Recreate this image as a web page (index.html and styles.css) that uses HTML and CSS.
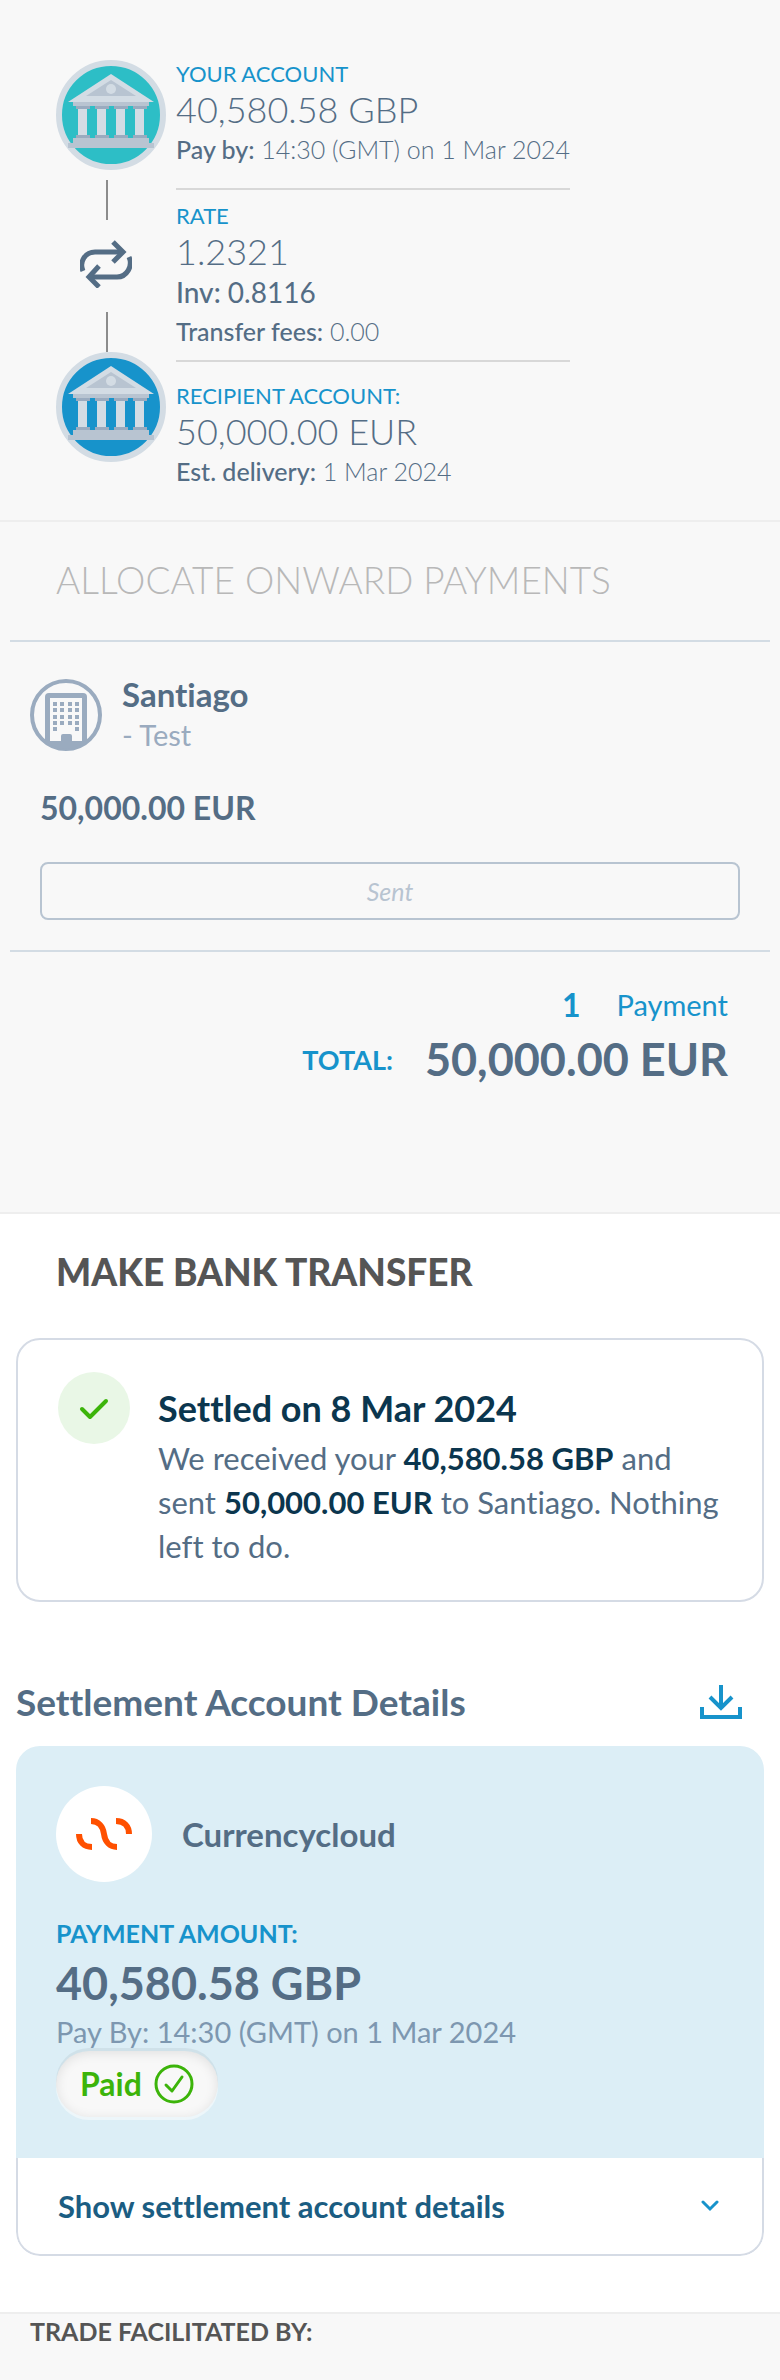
FILE: index.html
```html
<!DOCTYPE html>
<html lang="en">
<head>
    <meta charset="UTF-8">
    <meta name="viewport" content="width=device-width, initial-scale=1.0">
    <title>Trade Details</title>
    <link rel="stylesheet" href="styles.css">
</head>
<body>
    <!-- Bank icon, shared by both accounts -->
    <svg class="sprite" aria-hidden="true">
        <symbol id="bank" viewBox="0 0 110 110">
            <circle cx="55" cy="55" r="52" fill="currentColor" stroke="#d3dce4" stroke-width="6"/>
            <path d="M55 14L98 42H12Z" fill="#d3dce4"/>
            <path d="M55 20L80 36H30Z" fill="#b8c4d1"/>
            <circle cx="55" cy="29" r="5" fill="#d3dce4"/>
            <path d="M17 42H93V46H17Z" fill="#b8c4d1"/>
            <path d="M20 46H34V49H20ZM39 46H53V49H39ZM58 46H72V49H58ZM77 46H91V49H77Z" fill="#9aabbf"/>
            <path d="M22 49H31V75H22ZM41 49H50V75H41ZM60 49H69V75H60ZM79 49H88V75H79Z" fill="#d3dce4"/>
            <path d="M20 75H34V79H20ZM39 75H53V79H39ZM58 75H72V79H58ZM77 75H91V79H77Z" fill="#9aabbf"/>
            <path d="M17 78H93V83H98V88H12V83H17Z" fill="#b8c4d1"/>
        </symbol>
    </svg>

    <main>
        <section class="section summary">
            <div class="timeline">
                <svg class="bank-icon bank-source"><use href="#bank"/></svg>
                <span class="connector connector-top"></span>
                <svg class="swap-icon" viewBox="0 0 52 48" fill="none" stroke="#546d85" stroke-width="5">
                    <path d="M3 31C-1 22 5 12 15 12H43"/>
                    <path d="M33 2L43 12L33 22"/>
                    <path d="M49 17C53 26 47 37 37 37H9"/>
                    <path d="M19 26L9 37L19 47"/>
                </svg>
                <span class="connector"></span>
                <svg class="bank-icon bank-recipient"><use href="#bank"/></svg>
            </div>
            <div class="summary-list">
                <div class="summary-item">
                    <div class="label">YOUR ACCOUNT</div>
                    <div class="figure">40,580.58 GBP</div>
                    <div class="note"><b>Pay by:</b> 14:30 (GMT) on 1 Mar 2024</div>
                </div>
                <div class="summary-item rate">
                    <div class="label">RATE</div>
                    <div class="figure">1.2321</div>
                    <div class="inverse"><b>Inv:</b> 0.8116</div>
                    <div class="note"><b>Transfer fees:</b> 0.00</div>
                </div>
                <div class="summary-item recipient">
                    <div class="label">RECIPIENT ACCOUNT:</div>
                    <div class="figure">50,000.00 EUR</div>
                    <div class="note"><b>Est. delivery:</b> 1 Mar 2024</div>
                </div>
            </div>
        </section>

        <section class="section allocate">
            <h2 class="section-title title-light">ALLOCATE ONWARD PAYMENTS</h2>
            <div class="payment">
                <div class="payee">
                    <svg class="payee-icon" viewBox="0 0 72 72" fill="#9aabbf">
                        <circle cx="36" cy="36" r="34" fill="none" stroke="#9aabbf" stroke-width="4"/>
                        <path d="M15 62V18Q15 14 19 14H53Q57 14 57 18V62Q47 70 36 70Q25 70 15 62Z"/>
                        <path d="M20 19H52V62H42V57Q42 55 40 55H33Q31 55 31 57V62H20Z" fill="#f8f8f8"/>
                        <path d="M23 23h4v4h-4zM30 23h4v4h-4zM38 23h4v4h-4zM45 23h4v4h-4zM23 29h4v4h-4zM30 29h4v4h-4zM38 29h4v4h-4zM45 29h4v4h-4zM23 36h4v4h-4zM30 36h4v4h-4zM38 36h4v4h-4zM45 36h4v4h-4zM23 42h4v4h-4zM30 42h4v4h-4zM38 42h4v4h-4zM45 42h4v4h-4zM23 48h4v4h-4zM45 48h4v4h-4z"/>
                    </svg>
                    <div>
                        <div class="payee-name">Santiago</div>
                        <div class="payee-ref">- Test</div>
                    </div>
                </div>
                <div class="payment-amount">50,000.00 EUR</div>
                <div class="payment-status">Sent</div>
            </div>
            <div class="totals">
                <div class="total-count"><b>1</b><span>Payment</span></div>
                <div class="total-sum"><span class="total-label">TOTAL:</span><span class="amount">50,000.00 EUR</span></div>
            </div>
        </section>

        <section class="section transfer">
            <h2 class="section-title title-strong">MAKE BANK TRANSFER</h2>
            <div class="settled">
                <svg class="settled-icon" viewBox="0 0 72 72" fill="none">
                    <circle cx="36" cy="36" r="36" fill="#e9f7e6"/>
                    <path d="M24 37L32 45L48 29" stroke="#3cb40a" stroke-width="4" stroke-linecap="round" stroke-linejoin="round"/>
                </svg>
                <div class="settled-body">
                    <h3 class="settled-title">Settled on 8 Mar 2024</h3>
                    <p class="settled-text">We received your <b>40,580.58 GBP</b> and sent <b>50,000.00 EUR</b> to Santiago. Nothing left to do.</p>
                </div>
            </div>

            <div class="account-head">
                <h3 class="account-title">Settlement Account Details</h3>
                <button type="button" class="icon-btn" aria-label="Download">
                    <svg viewBox="0 0 42 34" width="42" height="34" fill="none" stroke="#1793cb" stroke-width="4">
                        <path d="M2 22V32H40V22"/>
                        <path d="M21 0V22"/>
                        <path d="M10 12L21 23L32 12"/>
                    </svg>
                </button>
            </div>
            <div class="account">
                <div class="account-main">
                    <div class="provider">
                        <span class="provider-logo">
                            <svg viewBox="0 0 56 32" width="56" height="32" fill="none" stroke="#ff5000" stroke-width="6">
                                <path d="M3 16C3 24 8 29 16 29"/>
                                <path d="M15 3C22 3 27 8 28 16C29 24 34 29 41 29"/>
                                <path d="M40 3C48 3 53 8 53 16"/>
                            </svg>
                        </span>
                        <span>Currencycloud</span>
                    </div>
                    <div class="due-label">PAYMENT AMOUNT:</div>
                    <div class="amount">40,580.58 GBP</div>
                    <div class="due-date">Pay By: 14:30 (GMT) on 1 Mar 2024</div>
                    <div class="paid">
                        Paid
                        <svg viewBox="0 0 40 40" width="40" height="40" fill="none" stroke="#3cb40a" stroke-width="3" stroke-linecap="round" stroke-linejoin="round">
                            <circle cx="20" cy="20" r="18"/>
                            <path d="M12 21L18 27L28 13"/>
                        </svg>
                    </div>
                </div>
                <button type="button" class="account-toggle">
                    Show settlement account details
                    <svg viewBox="0 0 18 12" width="18" height="12" fill="none" stroke="#1793cb" stroke-width="3" stroke-linecap="round">
                        <path d="M2 2L9 9L16 2"/>
                    </svg>
                </button>
            </div>
        </section>
    </main>

    <footer class="footer">TRADE FACILITATED BY:</footer>
</body>
</html>
```
FILE: styles.css
```css
* {
    margin: 0;
    padding: 0;
    box-sizing: border-box;
}

body {
    font-family: Lato, "Liberation Sans", sans-serif;
    font-size: 31px;
    font-variant-ligatures: none;
    color: #546d85;
    background: #f8f8f8;
    min-height: 100vh;
}

b {
    font-weight: 700;
}

.sprite {
    display: none;
}

.section {
    border-bottom: 2px solid #eeeeee;
}

/* Trade summary */
.summary {
    display: flex;
    gap: 10px;
    padding: 60px 56px 30px;
}

.timeline {
    display: flex;
    flex-direction: column;
    align-items: center;
    width: 110px;
}

.bank-icon {
    width: 110px;
    height: 110px;
}

.bank-source {
    color: #2dbec6;
}

.bank-recipient {
    color: #1793cb;
}

.connector {
    width: 2px;
    height: 40px;
    margin-right: 8px;
    background: #8c8c8c;
}

.connector-top {
    margin-top: 10px;
}

.swap-icon {
    width: 52px;
    height: 48px;
    margin: 20px 10px 24px 0;
}

.summary-item {
    padding-bottom: 20px;
}

.rate,
.recipient {
    border-top: 2px solid #d8d8d8;
}

.rate {
    padding-top: 12px;
    padding-bottom: 10px;
}

.recipient {
    padding-top: 20px;
    padding-bottom: 0;
}

.label {
    font-size: 22px;
    line-height: 28px;
    color: #1793cb;
}

.figure {
    font-size: 36px;
    font-weight: 300;
    line-height: 42px;
}

.note {
    font-size: 25px;
    font-weight: 300;
    line-height: 38px;
}

.note b,
.inverse b {
    font-weight: 500;
}

.inverse {
    font-size: 28px;
    line-height: 40px;
}

/* Onward payments */
.section-title {
    padding: 0 40px;
    font-size: 37px;
    line-height: 44px;
}

.title-light {
    font-weight: 300;
    color: #b8b8b8;
}

.title-strong {
    font-weight: 900;
    color: #555555;
}

.allocate {
    padding: 36px 10px 122px;
}

.allocate .section-title {
    padding: 0 46px;
}

.payment {
    margin-top: 38px;
    padding: 32px 30px 30px;
    border-top: 2px solid #d3dce4;
    border-bottom: 2px solid #d3dce4;
}

.payee {
    display: flex;
    align-items: center;
    gap: 20px;
    margin-left: -10px;
}

.payee-icon {
    width: 72px;
    height: 72px;
}

.payee-name {
    font-size: 33px;
    font-weight: 700;
    line-height: 40px;
}

.payee-ref {
    font-size: 29px;
    line-height: 42px;
    color: #9aabbf;
}

.payment-amount {
    margin: 32px 0 34px;
    font-size: 32px;
    font-weight: 700;
    line-height: 40px;
}

.payment-status {
    border: 2px solid #b8c4d1;
    border-radius: 8px;
    font-size: 25px;
    font-style: italic;
    line-height: 54px;
    text-align: center;
    color: #b8c4d1;
}

.totals {
    padding: 30px 42px 0 0;
}

.total-count,
.total-sum {
    display: flex;
    justify-content: flex-end;
    align-items: center;
}

.total-count {
    gap: 36px;
    font-size: 29px;
    line-height: 46px;
    color: #1793cb;
}

.total-count b {
    font-size: 32px;
}

.total-sum {
    gap: 32px;
}

.total-label {
    font-size: 27px;
    font-weight: 700;
    color: #1793cb;
}

.amount {
    font-size: 45px;
    font-weight: 700;
    line-height: 62px;
}

/* Bank transfer */
.transfer {
    padding: 36px 16px 56px;
    background: #ffffff;
}

.settled {
    display: flex;
    align-items: flex-start;
    gap: 28px;
    margin-top: 44px;
    padding: 32px 40px;
    border: 2px solid #d5dbe5;
    border-radius: 24px;
}

.settled-icon {
    flex: none;
    width: 72px;
    height: 72px;
}

.settled-body {
    padding-top: 14px;
}

.settled-title {
    margin-bottom: 6px;
    font-size: 36px;
    font-weight: 700;
    line-height: 44px;
    color: #0b364e;
}

.settled-text {
    line-height: 44px;
}

.settled-text b {
    color: #0b364e;
}

.account-head {
    display: flex;
    justify-content: space-between;
    align-items: center;
    margin-top: 74px;
    padding-right: 22px;
}

.account-title {
    font-size: 37px;
    font-weight: 700;
    line-height: 52px;
}

.icon-btn {
    border: none;
    background: none;
    cursor: pointer;
}

.icon-btn svg {
    display: block;
}

.account {
    margin-top: 18px;
    border-radius: 24px;
    overflow: hidden;
}

.account-main {
    padding: 40px 40px 38px;
    background: #dceef6;
}

.provider {
    display: flex;
    align-items: center;
    gap: 30px;
    font-size: 33px;
    font-weight: 700;
}

.provider-logo {
    display: flex;
    align-items: center;
    justify-content: center;
    width: 96px;
    height: 96px;
    border-radius: 50%;
    background: #ffffff;
}

.due-label {
    margin-top: 32px;
    font-size: 25px;
    font-weight: 700;
    line-height: 38px;
    color: #1793cb;
}

.due-date {
    font-size: 29px;
    line-height: 36px;
    color: #7d97b0;
}

.paid {
    display: flex;
    align-items: center;
    gap: 12px;
    width: fit-content;
    margin: 1px 0 3px;
    padding: 13px 24px;
    border-radius: 36px;
    background: #f8f8f8;
    box-shadow: inset 0 2px 12px rgba(0, 0, 0, 0.1), 0 -3px 0 #cfe1e9, 0 3px 0 #edf6fa;
    font-size: 32px;
    font-weight: 700;
    line-height: 40px;
    color: #3cb40a;
}

.account-toggle {
    display: flex;
    justify-content: space-between;
    align-items: center;
    width: 100%;
    height: 98px;
    padding: 0 43px 0 40px;
    border: 2px solid #d5dbe5;
    border-top: none;
    border-radius: 0 0 24px 24px;
    background: #ffffff;
    font: inherit;
    font-variant-ligatures: none;
    font-weight: 700;
    color: #1b5d82;
    cursor: pointer;
}

/* Footer */
.footer {
    padding: 0 30px;
    font-size: 25px;
    font-weight: 700;
    line-height: 34px;
    color: #555555;
}
```
